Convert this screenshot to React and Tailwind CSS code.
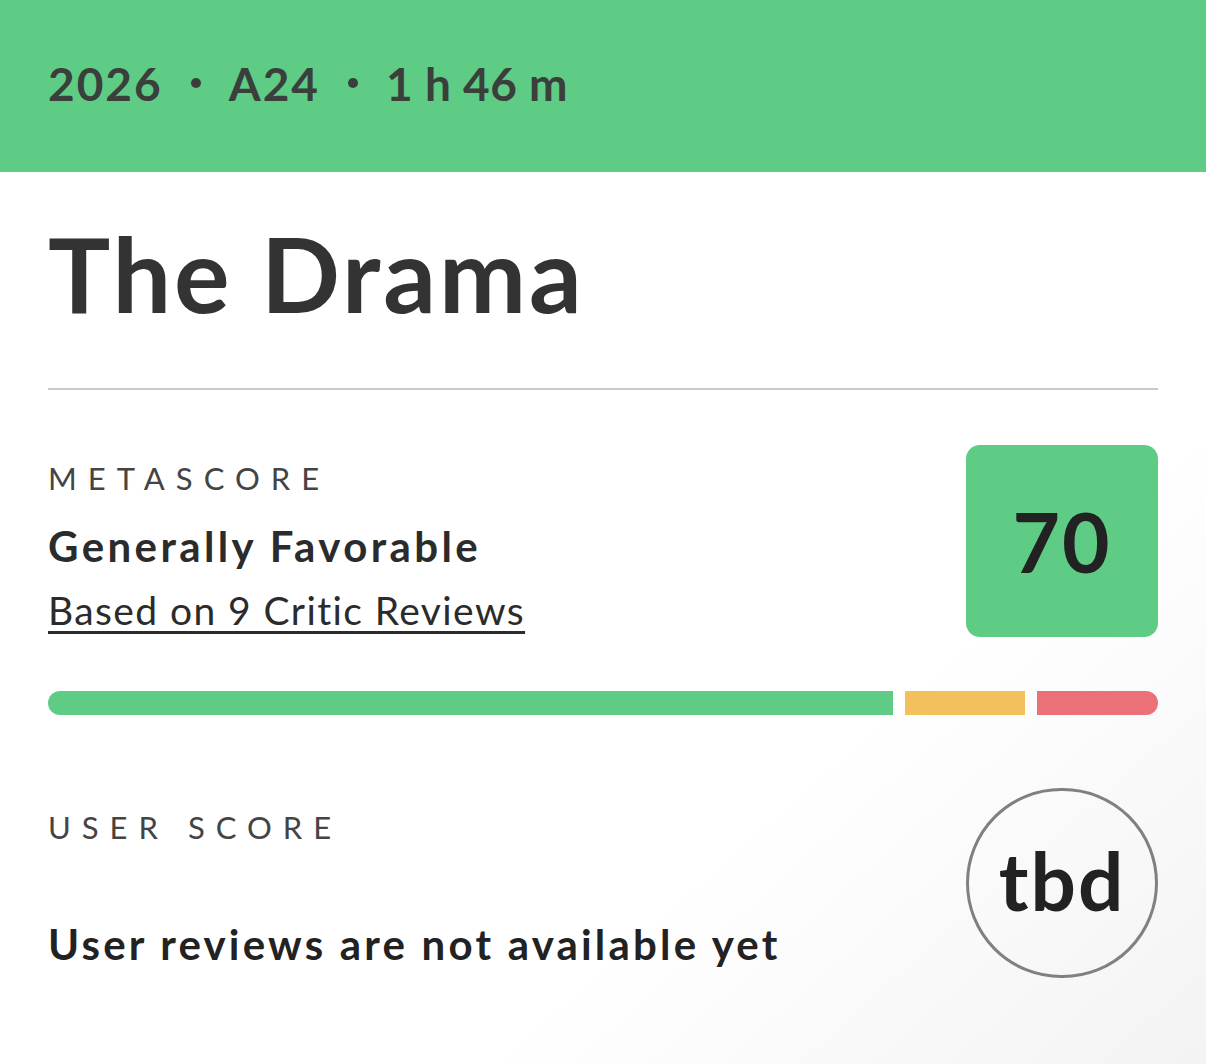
function App() {
    return (
        <div className="w-[1206px] h-[1064px] overflow-hidden bg-linear-to-br from-white from-70% to-[#f3f3f3] text-[#333333] font-['Lato','Open_Sans',sans-serif]">
            <div className="h-[172px] bg-[#5ecc84] flex items-center px-12 pb-[6px]">
                <p className="text-[46px] font-bold text-[#3a3f3c] tracking-[2px] flex items-center gap-[28px]">
                    <span>2026</span>
                    <span className="w-[10px] h-[10px] rounded-full bg-[#3a3f3c]"></span>
                    <span>A24</span>
                    <span className="w-[10px] h-[10px] rounded-full bg-[#3a3f3c]"></span>
                    <span className="tracking-[0.5px]">1 h 46 m</span>
                </p>
            </div>

            <div className="px-12">
                <div className="h-[218px] flex items-center border-b-2 border-[#c8c8c8]">
                    <h1 className="text-[104px] font-bold leading-none tracking-[3px] pb-[14px]">The Drama</h1>
                </div>

                <div className="flex justify-between pt-[55px]">
                    <div className="flex flex-col">
                        <p className="text-[31px] tracking-[11px] text-[#444] leading-none mt-[18px]">METASCORE</p>
                        <p className="text-[42px] font-bold leading-none mt-[31px] tracking-[3.4px] text-[#2b2b2b]">Generally Favorable</p>
                        <a href="#" className="text-[39px] leading-none mt-[24px] tracking-[1.4px] underline decoration-[3px] underline-offset-[6px] text-[#2b2b2b]">
                            Based on 9 Critic Reviews
                        </a>
                    </div>
                    <div className="w-[192px] h-[192px] rounded-[14px] bg-[#5ecc84] flex items-center justify-center">
                        <span className="text-[82px] font-bold text-[#222] leading-none tracking-[2px]">70</span>
                    </div>
                </div>

                <div className="flex gap-3 mt-[54px] h-[24px]">
                    <div className="w-[845px] bg-[#5ecc84] rounded-l-full"></div>
                    <div className="w-[120px] bg-[#f2c05c]"></div>
                    <div className="flex-1 bg-[#eb7077] rounded-r-full"></div>
                </div>

                <div className="flex justify-between mt-[73px]">
                    <div className="flex flex-col">
                        <p className="text-[31px] tracking-[11px] text-[#444] leading-none mt-[24px]">USER SCORE</p>
                        <p className="text-[42px] font-bold leading-none mt-[80px] tracking-[3.2px] text-[#222]">User reviews are not available yet</p>
                    </div>
                    <div className="w-[192px] h-[190px] rounded-full border-[3px] border-[#808080] flex items-center justify-center">
                        <span className="text-[80px] font-bold text-[#222] leading-none tracking-[2px] pb-[6px]">tbd</span>
                    </div>
                </div>
            </div>
        </div>
    );
}

export default App;
